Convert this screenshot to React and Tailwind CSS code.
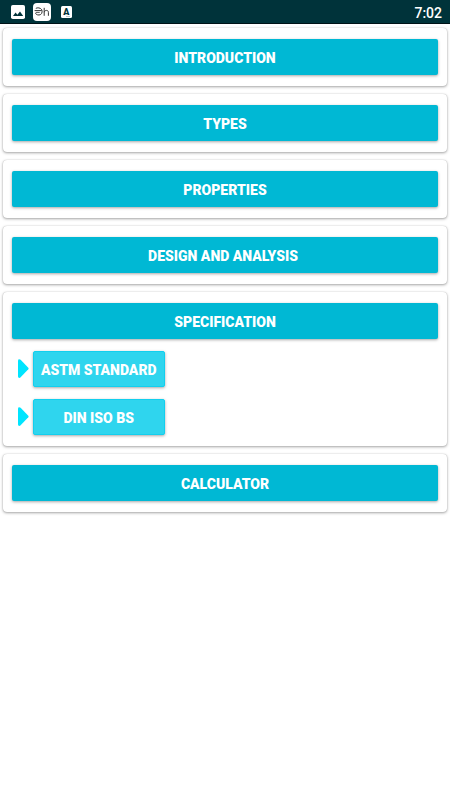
import React from 'react';

const sections = [
  { title: 'INTRODUCTION' },
  { title: 'TYPES' },
  { title: 'PROPERTIES' },
  { title: 'DESIGN AND ANALYSIS', shift: true },
  { title: 'SPECIFICATION', items: ['ASTM STANDARD', 'DIN ISO BS'] },
  { title: 'CALCULATOR' },
];

function StatusBar() {
  return (
    <div className="h-6 bg-[#00333a] border-b border-[#001317] flex items-center justify-between pl-[11px] pr-2">
      <div className="flex items-center">
        {/* GAMBAR */}
        <svg width="14" height="14" viewBox="0 0 14 14">
          <rect width="14" height="14" rx="1.8" fill="#fff" />
          <path d="M2 11 L4.6 7.6 L6.4 9.8 L9 6.4 L12.2 11 Z" fill="#00333a" />
        </svg>
        {/* LOGO */}
        <svg width="18" height="18" viewBox="0 0 18 18" className="ml-2">
          <rect width="18" height="18" rx="4" fill="#fff" />
          <path
            d="M2.8 5.4 C4.2 4.4 7.6 4.6 8.8 6.8 C9.8 9.4 8.4 12 6 12 C3.6 12 2.2 10.8 2.8 9.8 C3.6 9 4.8 9.6 6.6 9.4 M1.6 7.6 H8.6 M11.2 4.8 V12.8 M11.2 9.2 C11.6 7 15.4 6.6 15.4 9.3 V12.8"
            fill="none"
            stroke="#333"
            strokeWidth="1"
          />
        </svg>
        {/* HURUF A */}
        <svg width="11" height="12" viewBox="0 0 11 12" className="ml-[10px]">
          <rect width="11" height="12" rx="1.5" fill="#fff" />
          <text x="5.2" y="9" fontSize="9" fontWeight="900" textAnchor="middle" fill="#00333a">A</text>
          <path d="M5 10.5 H9" stroke="#00333a" strokeWidth=".6" opacity=".4" />
        </svg>
      </div>
      <span className="text-white text-sm leading-none font-medium pt-[3px]">7:02</span>
    </div>
  );
}

function SubItem({ label }) {
  return (
    <div className="flex items-center mt-3 pl-1.5">
      <svg width="11" height="20" viewBox="0 0 11 20" className="mr-[3.5px]">
        <path d="M0 1.6 Q0 .2 1.3 .2 Q2 .2 2.6 .8 L10.3 8.7 Q11 9.5 10.3 10.3 L2.6 18.3 Q2 18.9 1.3 18.9 Q0 18.9 0 17.5 Z" fill="#00e5ff" />
      </svg>
      <button className="w-[132.5px] h-9 pt-0.5 rounded-[2px] bg-[#2fd5ee] border border-[#12cfee] text-white text-sm font-black whitespace-nowrap shadow-[0_1px_3px_rgba(0,0,0,0.35)]">
        {label}
      </button>
    </div>
  );
}

export default function App() {
  return (
    <div className="min-h-screen bg-white font-[Roboto,sans-serif]">
      <StatusBar />

      <div className="flex flex-col gap-2 pt-1 px-[3px]">
        {sections.map((section) => (
          <div
            key={section.title}
            className="bg-white rounded-[4px] px-[9px] py-[11px] shadow-[0_1px_3px_rgba(0,0,0,0.35),0_0_1px_rgba(0,0,0,0.25)]"
          >
            <button
              className={`block w-full h-9 pt-0.5 rounded-[2px] bg-[#00b8d4] text-white text-sm font-black shadow-[0_1px_3px_rgba(0,0,0,0.35)] ${
                section.shift ? 'pr-1' : ''
              }`}
            >
              {section.title}
            </button>
            {section.items?.map((item) => (
              <SubItem key={item} label={item} />
            ))}
          </div>
        ))}
      </div>
    </div>
  );
}
